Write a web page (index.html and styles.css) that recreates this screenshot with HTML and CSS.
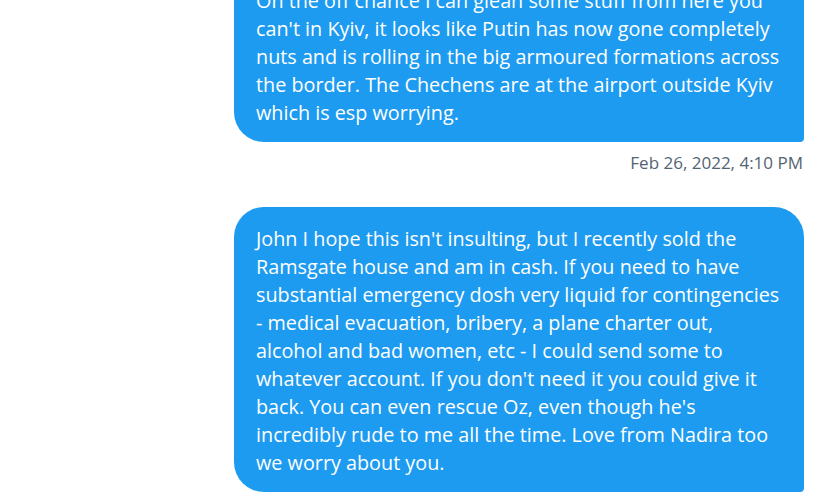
FILE: index.html
```html
<!DOCTYPE html>
<html>
<head>
<meta charset="utf-8">
<link rel="stylesheet" href="styles.css">
</head>
<body>
<div class="thread">
  <div class="msg">
    <div class="bubble">
      <span class="ln">On the off chance I can glean some stuff from here you</span>
      <span class="ln">can't in Kyiv, it looks like Putin has now gone completely</span>
      <span class="ln">nuts and is rolling in the big armoured formations across</span>
      <span class="ln">the border. The Chechens are at the airport outside Kyiv</span>
      <span class="ln">which is esp worrying.</span>
    </div>
    <div class="time">Feb 26, 2022, 4:10 PM</div>
  </div>
  <div class="msg">
    <div class="bubble">
      <span class="ln">John I hope this isn't insulting, but I recently sold the</span>
      <span class="ln">Ramsgate house and am in cash. If you need to have</span>
      <span class="ln">substantial emergency dosh very liquid for contingencies</span>
      <span class="ln">- medical evacuation, bribery, a plane charter out,</span>
      <span class="ln">alcohol and bad women, etc - I could send some to</span>
      <span class="ln">whatever account. If you don't need it you could give it</span>
      <span class="ln">back. You can even rescue Oz, even though he's</span>
      <span class="ln">incredibly rude to me all the time. Love from Nadira too</span>
      <span class="ln">we worry about you.</span>
    </div>
  </div>
</div>
</body>
</html>
```
FILE: styles.css
```css
html, body {
  margin: 0;
  padding: 0;
  background: #ffffff;
}
body {
  width: 820px;
  height: 500px;
  overflow: hidden;
  font-family: "Open Sans", "Noto Sans", sans-serif;
}
.thread {
  display: flex;
  flex-direction: column;
  align-items: flex-end;
  padding-right: 16px;
  margin-top: -31px;
  gap: 33px;
}
.msg {
  display: flex;
  flex-direction: column;
  align-items: flex-end;
  gap: 10px;
}
.bubble {
  box-sizing: border-box;
  width: 570px;
  background: #1d9bf0;
  color: #ffffff;
  font-size: 19.8px;
  line-height: 28px;
  padding: 18px 22px 15px;
  border-radius: 30px 30px 4px 30px;
}
.ln {
  display: block;
  white-space: nowrap;
}
.time {
  font-size: 17px;
  line-height: 22px;
  color: #536471;
  padding-right: 1px;
}
```
